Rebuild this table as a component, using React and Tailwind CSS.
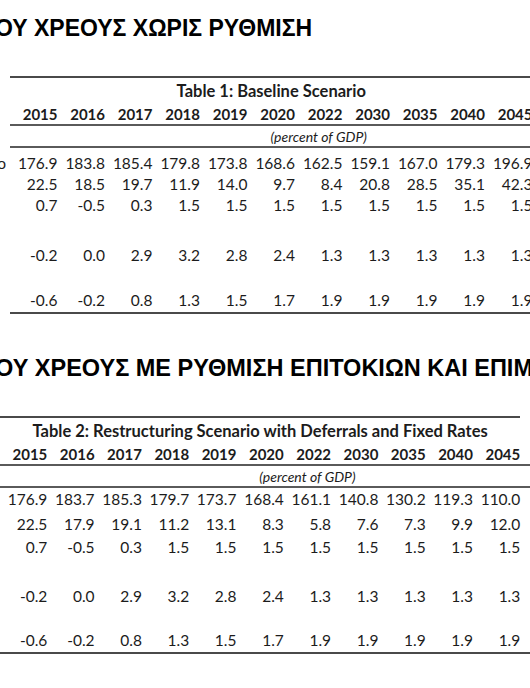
const years = ["2015", "2016", "2017", "2018", "2019", "2020", "2022", "2030", "2035", "2040", "2045"];

const table1 = [
  { h: "h-[22px] leading-[22px]", label: "Debt-to-GDP ratio", vals: ["176.9", "183.8", "185.4", "179.8", "173.8", "168.6", "162.5", "159.1", "167.0", "179.3", "196.9"] },
  { h: "h-[21px] leading-[21px]", vals: ["22.5", "18.5", "19.7", "11.9", "14.0", "9.7", "8.4", "20.8", "28.5", "35.1", "42.3"] },
  { h: "h-[21px] leading-[21px]", vals: ["0.7", "-0.5", "0.3", "1.5", "1.5", "1.5", "1.5", "1.5", "1.5", "1.5", "1.5"] },
  { gap: "h-[28px]" },
  { h: "h-[22px] leading-[22px]", vals: ["-0.2", "0.0", "2.9", "3.2", "2.8", "2.4", "1.3", "1.3", "1.3", "1.3", "1.3"] },
  { gap: "h-[23px]" },
  { h: "h-[22px] leading-[22px]", vals: ["-0.6", "-0.2", "0.8", "1.3", "1.5", "1.7", "1.9", "1.9", "1.9", "1.9", "1.9"] },
];

const table2 = [
  { h: "h-[24px] leading-[22px]", vals: ["176.9", "183.7", "185.3", "179.7", "173.7", "168.4", "161.1", "140.8", "130.2", "119.3", "110.0"] },
  { h: "h-[25px] leading-[25px]", vals: ["22.5", "17.9", "19.1", "11.2", "13.1", "8.3", "5.8", "7.6", "7.3", "9.9", "12.0"] },
  { h: "h-[21px] leading-[21px]", vals: ["0.7", "-0.5", "0.3", "1.5", "1.5", "1.5", "1.5", "1.5", "1.5", "1.5", "1.5"] },
  { gap: "h-[27px]" },
  { h: "h-[22px] leading-[22px]", vals: ["-0.2", "0.0", "2.9", "3.2", "2.8", "2.4", "1.3", "1.3", "1.3", "1.3", "1.3"] },
  { gap: "h-[22px]" },
  { h: "h-[22px] leading-[22px]", vals: ["-0.6", "-0.2", "0.8", "1.3", "1.5", "1.7", "1.9", "1.9", "1.9", "1.9", "1.9"] },
];

function Table({ title, rows, col, className, topPad }) {
  return (
    <div className={`flex flex-col text-[#1c1c1c] text-[15.5px] font-['Lato',sans-serif] ${className}`}>
      <div className="border-t-2 border-[#4a4a4a] h-[27px] leading-[26px] text-[16.5px] font-bold text-center whitespace-nowrap" style={{ width: col * 11 }}>
        {title}
      </div>
      <div className="flex h-[23px] leading-[23px] text-[15px] font-bold border-b-2 border-[#5a5a5a]">
        {years.map((y) => (
          <div key={y} className="text-right shrink-0" style={{ width: col }}>
            {y}
          </div>
        ))}
      </div>
      <div className="flex h-[22px] leading-[22px] text-[14px] italic border-b-2 border-[#5a5a5a]">
        <div className="shrink-0" style={{ width: col * 6 }} />
        <div className="shrink-0 flex justify-center whitespace-nowrap" style={{ width: col }}>
          (percent of GDP)
        </div>
      </div>
      <div className={topPad} />
      {rows.map((r, i) =>
        r.gap ? (
          <div key={i} className={r.gap} />
        ) : (
          <div key={i} className={`flex ${r.h}`}>
            {r.label && (
              <div className="w-0 flex justify-end">
                <span className="whitespace-nowrap pr-[4px]">{r.label}</span>
              </div>
            )}
            {r.vals.map((v, j) => (
              <div key={j} className="text-right shrink-0" style={{ width: col }}>
                {v}
              </div>
            ))}
          </div>
        )
      )}
      <div className="border-b-2 border-[#4a4a4a] mt-[1px]" />
    </div>
  );
}

export default function App() {
  return (
    <div className="w-[530px] h-[688px] overflow-hidden bg-white flex flex-col">
      <h1 className="mt-[16px] ml-[-5px] h-[24px] leading-[24px] text-[23px] font-bold text-black whitespace-nowrap font-['Liberation_Sans',Arial,sans-serif]">
        ΟΥ ΧΡΕΟΥΣ ΧΩΡΙΣ ΡΥΘΜΙΣΗ
      </h1>
      <Table title="Table 1: Baseline Scenario" rows={table1} col={47.5} className="mt-[36px] ml-[10px]" topPad="h-[4px]" />
      <h1 className="mt-[42px] ml-[-5px] h-[24px] leading-[24px] text-[23.5px] font-bold text-black whitespace-nowrap font-['Liberation_Sans',Arial,sans-serif]">
        ΟΥ ΧΡΕΟΥΣ ΜΕ ΡΥΘΜΙΣΗ ΕΠΙΤΟΚΙΩΝ ΚΑΙ ΕΠΙΜΗΚΥΝΣΗ
      </h1>
      <Table title="Table 2: Restructuring Scenario with Deferrals and Fixed Rates" rows={table2} col={47.3} className="mt-[36px]" topPad="h-0" />
    </div>
  );
}
